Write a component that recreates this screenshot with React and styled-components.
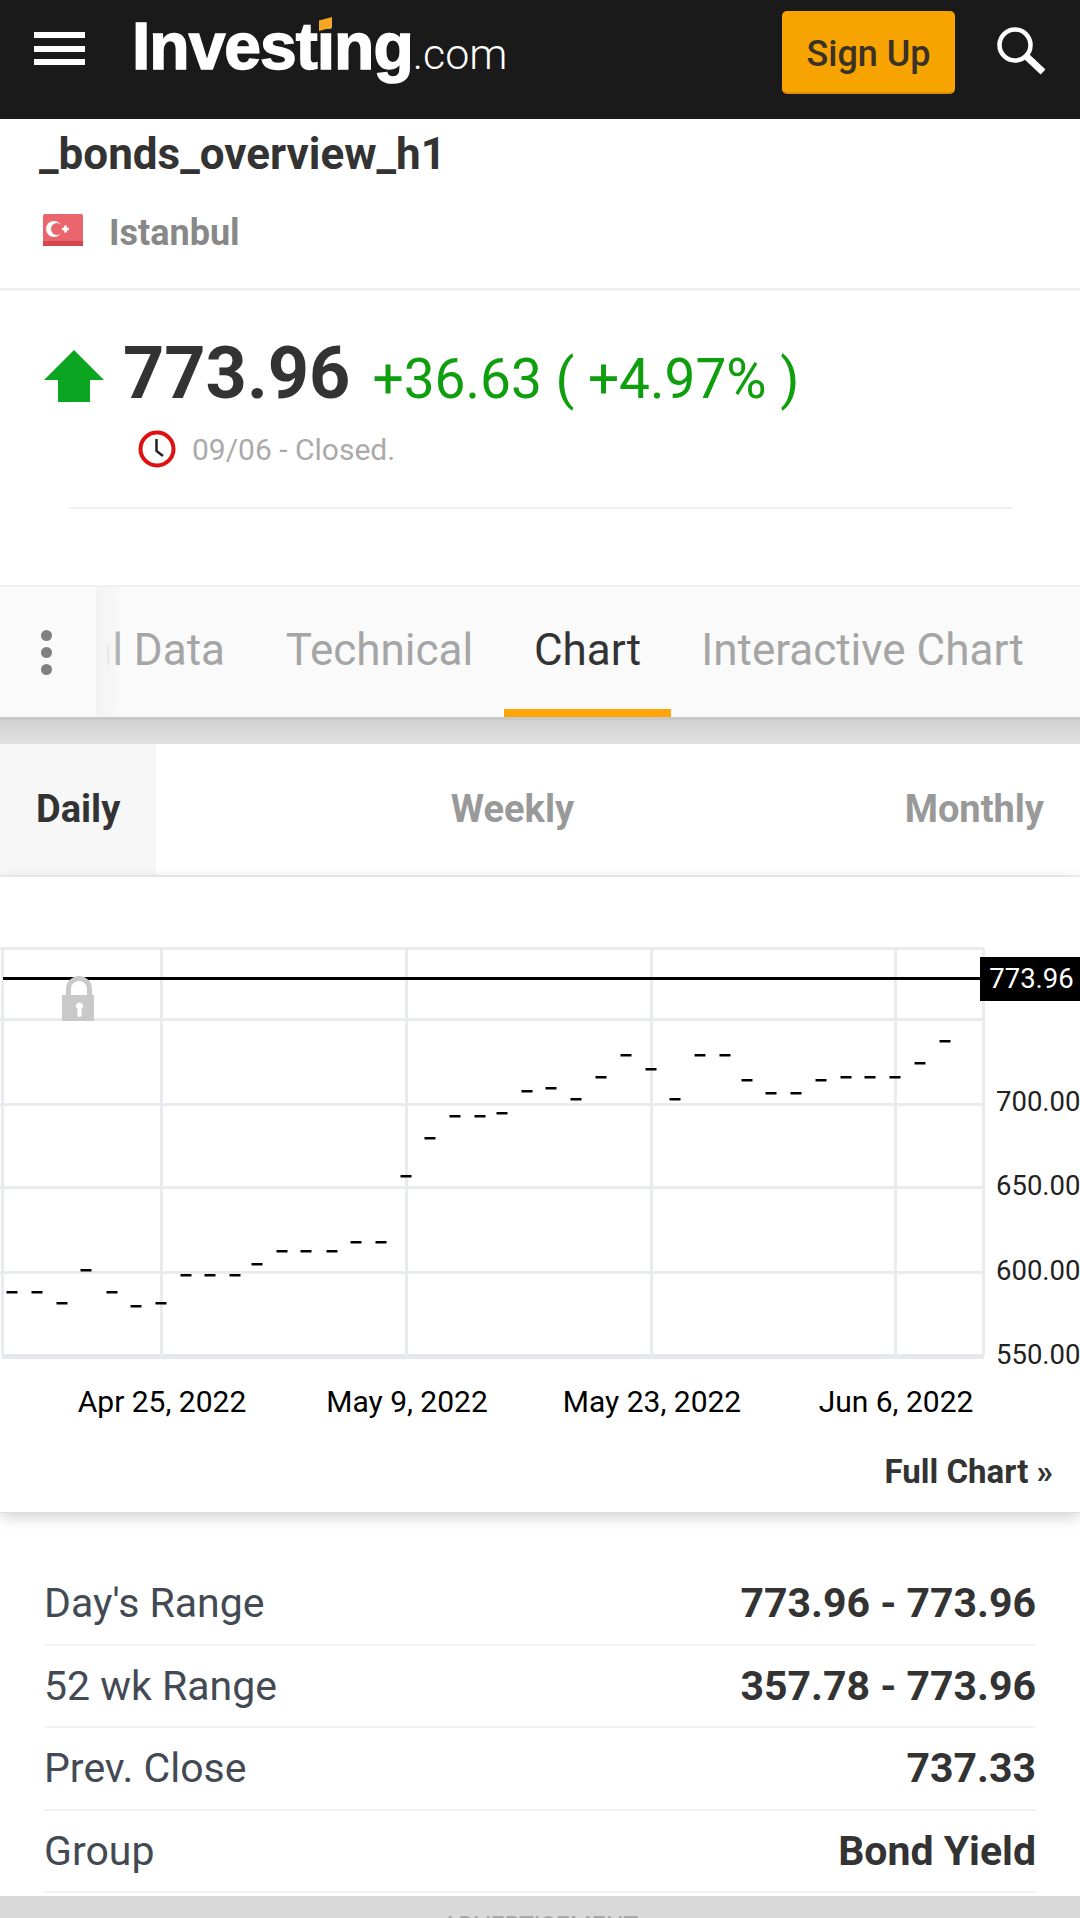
import React from 'react'
import styled, { createGlobalStyle } from 'styled-components'

const GlobalStyle = createGlobalStyle`
  html, body {
    margin: 0;
    padding: 0;
    background: #fff;
    font-family: Roboto, "Liberation Sans", sans-serif;
  }
  * { box-sizing: border-box; }
`

const Page = styled.div`
  width: 1080px;
  height: 1918px;
  overflow: hidden;
  display: flex;
  flex-direction: column;
`
const Header = styled.header`
  height: 119px;
  flex: none;
  background: #1a1a1a;
  display: flex;
  align-items: flex-start;
  padding: 11px 35px 0 34px;
`
const Burger = styled.div`
  width: 51px;
  height: 33px;
  margin-top: 21px;
  display: flex;
  flex-direction: column;
  justify-content: space-between;
  span {
    display: block;
    height: 6px;
    background: #fff;
  }
`
const Logo = styled.div`
  margin-left: 47px;
  margin-top: -5px;
  height: 80px;
  display: flex;
  align-items: baseline;
  color: #fff;
  position: relative;
`
const LogoBold = styled.span`
  font-family: "Liberation Sans", sans-serif;
  font-weight: 700;
  font-size: 66px;
  letter-spacing: -1px;
  line-height: 80px;
  -webkit-text-stroke: 1.5px #fff;
`
const LogoThin = styled.span`
  font-family: Roboto, sans-serif;
  font-weight: 300;
  font-size: 43px;
`
const LogoMark = styled.i`
  position: absolute;
  left: 187px;
  top: 11px;
  width: 13px;
  height: 14px;
  background: #f5a623;
  clip-path: polygon(0 25%, 100% 0, 100% 75%, 0 100%);
`
const SignUp = styled.button`
  margin-left: auto;
  width: 173px;
  height: 83px;
  padding: 4px 0 0;
  border: none;
  border-bottom: 2px solid #d98f00;
  border-radius: 5px;
  background: #f7a300;
  color: #3a3226;
  font-family: Roboto, sans-serif;
  font-weight: 500;
  font-size: 36px;
`
const SearchBox = styled.div`
  width: 50px;
  height: 50px;
  margin-left: 40px;
  margin-top: 16px;
`
const TitleBlock = styled.section`
  height: 172px;
  flex: none;
  padding: 8px 39px 0;
  border-bottom: 3px solid #f0f0f0;
`
const Title = styled.h1`
  margin: 0;
  height: 54px;
  color: #333;
  font-size: 44px;
  font-weight: 700;
  line-height: 54px;
`
const Exchange = styled.div`
  display: flex;
  align-items: center;
  gap: 26px;
  margin-top: 31px;
  padding-left: 4px;
  color: #888;
  font-size: 36px;
  font-weight: 700;
`
const FlagIcon = styled.svg`
  margin-top: -7px;
  filter: blur(0.6px);
`
const QuoteBlock = styled.section`
  height: 294px;
  flex: none;
`
const QuoteRow = styled.div`
  display: flex;
  align-items: baseline;
  padding: 43px 0 0 44px;
  height: 139px;
`
const Arrow = styled.svg`
  width: 60px;
  height: 52px;
  align-self: flex-start;
  margin-top: 16px;
  flex: none;
`
const Last = styled.span`
  margin-left: 19px;
  color: #333;
  font-size: 72px;
  font-weight: 700;
  line-height: 80px;
`
const Change = styled.span`
  margin-left: 22px;
  color: #0e9e0e;
  font-size: 55px;
  white-space: nowrap;
`
const Status = styled.div`
  display: flex;
  align-items: center;
  gap: 16px;
  margin-left: 138px;
  color: #aaa;
  font-size: 30px;
`
const Divider = styled.div`
  margin: 39px 68px 0 69px;
  height: 2px;
  background: #f0f0f0;
`
const TabBar = styled.nav`
  height: 135px;
  flex: none;
  background: #fafafa;
  border-top: 2px solid #f0f0f0;
  border-bottom: 3px solid #c8c8c8;
  overflow: hidden;
  position: relative;
`
const MoreButton = styled.div`
  position: relative;
  z-index: 1;
  width: 96px;
  height: 100%;
  background: #fafafa;
  box-shadow: 8px 0 20px rgba(0, 0, 0, 0.08);
  display: flex;
  flex-direction: column;
  gap: 6px;
  align-items: center;
  padding: 43px 3px 0 0;
  span {
    display: block;
    width: 11px;
    height: 11px;
    border-radius: 50%;
    background: #808080;
  }
  &::after {
    content: '';
    position: absolute;
    left: 96px;
    top: 0;
    bottom: 0;
    width: 24px;
    background: linear-gradient(to right, #f2f2f2 0%, #f6f6f6 42%, rgba(250, 250, 250, 0) 100%);
  }
`
const Tab = styled.div`
  position: absolute;
  top: 0;
  bottom: 0;
  left: ${(p) => p.$left}px;
  width: ${(p) => p.$width}px;
  display: flex;
  justify-content: ${(p) => (p.$end ? 'flex-end' : 'center')};
  padding-top: 38px;
  font-size: 44px;
  line-height: 50px;
  white-space: nowrap;
  color: ${(p) => (p.$active ? '#333' : '#a5a5a5')};
  border-bottom: ${(p) => (p.$active ? '8px solid #ffa505' : 'none')};
`
const Band = styled.div`
  height: 24px;
  flex: none;
  background: linear-gradient(#d2d2d2, #e0e0e0);
`
const RangeRow = styled.div`
  height: 133px;
  flex: none;
  display: flex;
  justify-content: space-between;
  border-bottom: 2px solid #f0f0f0;
`
const RangeCell = styled.div`
  display: flex;
  align-items: center;
  height: 131px;
  padding: 0 36px 1px;
  font-size: 38px;
  font-weight: 700;
  background: ${(p) => (p.$active ? '#f7f7f7' : 'transparent')};
  color: ${(p) => (p.$active ? '#333' : '#999')};
`
const ChartBox = styled.div`
  height: 636px;
  flex: none;
  position: relative;
  box-shadow: 0 4px 14px rgba(0, 0, 0, 0.18);
  border-bottom: 1px solid #ddd;
  background: #fff;
`
const ChartSvg = styled.svg`
  display: block;
  width: 1080px;
  height: 575px;
`
const PriceTag = styled.div`
  position: absolute;
  left: 980px;
  top: 80px;
  width: 100px;
  height: 44px;
  padding-left: 3px;
  background: #000;
  color: #fff;
  font-size: 27.5px;
  line-height: 43px;
  text-align: center;
`
const FullChart = styled.div`
  text-align: right;
  padding-right: 27px;
  color: #333;
  font-size: 33px;
  font-weight: 700;
  line-height: 40px;
`
const Stats = styled.section`
  flex: 1;
  padding: 50px 44px 0;
`
const StatRow = styled.div`
  height: 82.6px;
  display: flex;
  justify-content: space-between;
  align-items: center;
  border-bottom: 2px solid #f2f2f2;
  font-size: 41px;
`
const StatLabel = styled.span`
  color: #434a54;
`
const StatValue = styled.span`
  color: #333;
  font-weight: 700;
`
const AdBar = styled.div`
  height: 22px;
  flex: none;
  background: #d9d9d9;
  color: #a8a8a8;
  font-size: 25px;
  text-align: center;
  padding-top: 15px;
  line-height: 32px;
  overflow: hidden;
`

const CHART_TOP = 877
const gridX = [2, 161, 406, 651, 895, 983]
const gridY = [948, 1019, 1104, 1187, 1272]
const dashes = [
  [12, 1292], [37, 1292], [62, 1303], [86, 1270], [112, 1292], [136, 1306], [161, 1303],
  [186, 1275], [210, 1275], [235, 1275], [257, 1264], [282, 1251], [306, 1251], [332, 1251],
  [356, 1242], [381, 1242], [406, 1176], [430, 1138], [455, 1116], [480, 1116], [502, 1113], [527, 1091],
  [551, 1088], [576, 1099], [601, 1077], [626, 1055], [651, 1069], [675, 1099], [700, 1055], [725, 1055],
  [747, 1080], [771, 1093], [796, 1093], [821, 1080], [846, 1077], [870, 1077], [895, 1077], [920, 1063], [945, 1041],
]
const yLabels = [['700.00', 1101], ['650.00', 1185], ['600.00', 1270], ['550.00', 1354]]
const xLabels = [['Apr 25, 2022', 162], ['May 9, 2022', 407], ['May 23, 2022', 652], ['Jun 6, 2022', 896]]

const stats = [
  ["Day's Range", '773.96 - 773.96'],
  ['52 wk Range', '357.78 - 773.96'],
  ['Prev. Close', '737.33'],
  ['Group', 'Bond Yield'],
]

function Chart() {
  return (
    <ChartSvg viewBox={`0 ${CHART_TOP} 1080 575`} fontFamily="Roboto, sans-serif">
      {gridY.map((y) => (
        <rect key={y} x="0" y={y - 1} width="984" height="3" fill="#eaebef" />
      ))}
      <rect x="2" y="1354" width="982" height="5" fill="#e6e8eb" />
      {gridX.map((x) => (
        <rect key={x} x={x - 1} y="948" width="3" height="408" fill="#eaebef" />
      ))}
      <rect x="3" y="977" width="978" height="3" fill="#000" />
      <path
        fill="#c9c9c9"
        fillRule="evenodd"
        d="M66 995v-6a13 13 0 0 1 26 0v6h2v26H62v-26z M71 995h16v-6a8 8 0 0 0-16 0z M79.500 1002.500a3.500 3.500 0 0 1 2 6.400v6.100a2 2 0 0 1-4 0v-6.100a3.500 3.500 0 0 1 2-6.400z"
      />
      {dashes.map(([x, y]) => (
        <rect key={`${x}-${y}`} x={x - 5.5} y={y - 1} width="11" height="2.5" fill="#000" />
      ))}
      {yLabels.map(([t, y]) => (
        <text key={t} x="996" y={y + 10} fontSize="27.5" fill="#222">{t}</text>
      ))}
      {xLabels.map(([t, x]) => (
        <text key={t} x={x} y="1412" fontSize="30" fill="#000" textAnchor="middle">{t}</text>
      ))}
    </ChartSvg>
  )
}

export default function App() {
  return (
    <Page>
      <GlobalStyle />
      <Header>
        <Burger><span /><span /><span /></Burger>
        <Logo>
          <LogoBold>Investing</LogoBold>
          <LogoThin>.com</LogoThin>
          <LogoMark />
        </Logo>
        <SignUp>Sign Up</SignUp>
        <SearchBox>
          <svg width="50" height="50" viewBox="0 0 50 50" fill="none" stroke="#fff">
            <circle cx="20" cy="18" r="15.5" strokeWidth="4.5" />
            <path d="M31 29 L48 45" strokeWidth="7" />
          </svg>
        </SearchBox>
      </Header>

      <TitleBlock>
        <Title>_bonds_overview_h1</Title>
        <Exchange>
          <FlagIcon width="40" height="32" viewBox="0 0 40 32">
            <rect width="40" height="32" rx="2" fill="#e8666c" />
            <rect y="27" width="40" height="5" fill="#d2474e" />
            <circle cx="11" cy="15" r="8" fill="#fff" />
            <circle cx="14" cy="15" r="6" fill="#e8666c" />
            <path d="M19 15h7M22.500 11.500v7" stroke="#fff" strokeWidth="2.5" />
          </FlagIcon>
          Istanbul
        </Exchange>
      </TitleBlock>

      <QuoteBlock>
        <QuoteRow>
          <Arrow viewBox="0 0 60 52">
            <path d="M30 0 L60 30 H46 V52 H14 V30 H0 Z" fill="#0ca522" />
          </Arrow>
          <Last>773.96</Last>
          <Change>+36.63 ( +4.97% )</Change>
        </QuoteRow>
        <Status>
          <svg width="38" height="38" viewBox="0 0 38 38" fill="none">
            <circle cx="19" cy="19" r="16.5" stroke="#e01010" strokeWidth="4" />
            <path d="M18.500 9 V21 L25 26" stroke="#222" strokeWidth="2.5" />
          </svg>
          09/06 - Closed.
        </Status>
        <Divider />
      </QuoteBlock>

      <TabBar>
        <MoreButton><span /><span /><span /></MoreButton>
        <Tab $left={-100} $width={325} $end>Historical Data</Tab>
        <Tab $left={287} $width={185}>Technical</Tab>
        <Tab $left={504} $width={167} $active>Chart</Tab>
        <Tab $left={702} $width={321}>Interactive Chart</Tab>
      </TabBar>
      <Band />

      <RangeRow>
        <RangeCell $active>Daily</RangeCell>
        <RangeCell>Weekly</RangeCell>
        <RangeCell>Monthly</RangeCell>
      </RangeRow>

      <ChartBox>
        <Chart />
        <PriceTag>773.96</PriceTag>
        <FullChart>Full Chart »</FullChart>
      </ChartBox>

      <Stats>
        {stats.map(([label, value]) => (
          <StatRow key={label}>
            <StatLabel>{label}</StatLabel>
            <StatValue>{value}</StatValue>
          </StatRow>
        ))}
      </Stats>

      <AdBar>ADVERTISEMENT</AdBar>
    </Page>
  )
}
